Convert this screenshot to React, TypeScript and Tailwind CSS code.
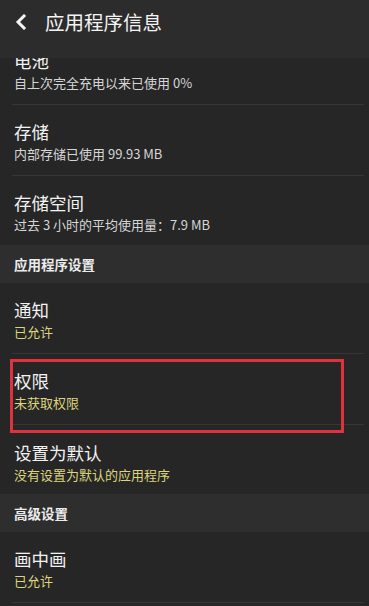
import React from "react";

type Row = { title: string; sub: string; yellow?: boolean; divider?: boolean; first?: boolean };

function Item({ title, sub, yellow, divider = true, first }: Row) {
  return (
    <div className={`relative h-[71px] shrink-0 ${first ? "mt-[-24px]" : ""}`}>
      <div className="pl-[14px] pt-[16px]">
        <div className="text-[17.5px] leading-[22px] text-[#f2f2f2]">{title}</div>
        <div className={`mt-[2px] text-[13px] leading-[18px] ${yellow ? "text-[#dcd47e]" : "text-[#d6d6d6]"}`}>{sub}</div>
      </div>
      {divider && <div className="absolute bottom-0 left-[12px] right-[5px] h-px bg-[#363636]" />}
    </div>
  );
}

function Section({ title, h }: { title: string; h: string }) {
  return (
    <div className={`flex shrink-0 items-center bg-[#2e2e2e] pl-[14px] ${h}`}>
      <span className="text-[13.5px] font-semibold leading-[18px] text-[#ececec]">{title}</span>
    </div>
  );
}

export default function App() {
  return (
    <div
      className="relative h-[606px] w-[369px] overflow-hidden bg-[#262626]"
      style={{ fontFamily: '"Noto Sans CJK SC", "Noto Sans", sans-serif' }}
    >
      <header className="relative z-10 flex h-[58px] items-center bg-[#2c2c2c] pb-[14px]">
        <svg className="ml-[14px] h-[16px] w-[14px]" viewBox="0 0 14 16" fill="none">
          <path d="M10 2 L4 8 L10 14" stroke="#f4f4f4" strokeWidth="3" strokeLinecap="square" strokeLinejoin="miter" />
        </svg>
        <span className="ml-[17px] text-[19.5px] leading-[26px] text-[#f4f4f4]">应用程序信息</span>
      </header>
      <div className="flex h-[548px] flex-col overflow-hidden">
        <Item first title="电池" sub="自上次完全充电以来已使用 0%" />
        <Item title="存储" sub="内部存储已使用 99.93 MB" />
        <div className="h-[69px] shrink-0">
          <div className="pl-[14px] pt-[16px]">
            <div className="text-[17.5px] leading-[22px] text-[#f2f2f2]">存储空间</div>
            <div className="mt-[2px] text-[13px] leading-[18px] text-[#d6d6d6]">过去 3 小时的平均使用量：7.9 MB</div>
          </div>
        </div>
        <Section title="应用程序设置" h="h-[38px]" />
        <Item title="通知" sub="已允许" yellow />
        <Item title="权限" sub="未获取权限" yellow />
        <div className="h-[69px] shrink-0">
          <div className="pl-[14px] pt-[17px]">
            <div className="text-[17.5px] leading-[22px] text-[#f2f2f2]">设置为默认</div>
            <div className="mt-[2px] text-[13px] leading-[18px] text-[#dcd47e]">没有设置为默认的应用程序</div>
          </div>
        </div>
        <Section title="高级设置" h="h-[38px]" />
        <Item title="画中画" sub="已允许" yellow />
      </div>
      <div className="pointer-events-none absolute left-[10px] top-[359px] h-[74px] w-[334px] border-[3px] border-[#e0313e]" />
    </div>
  );
}
